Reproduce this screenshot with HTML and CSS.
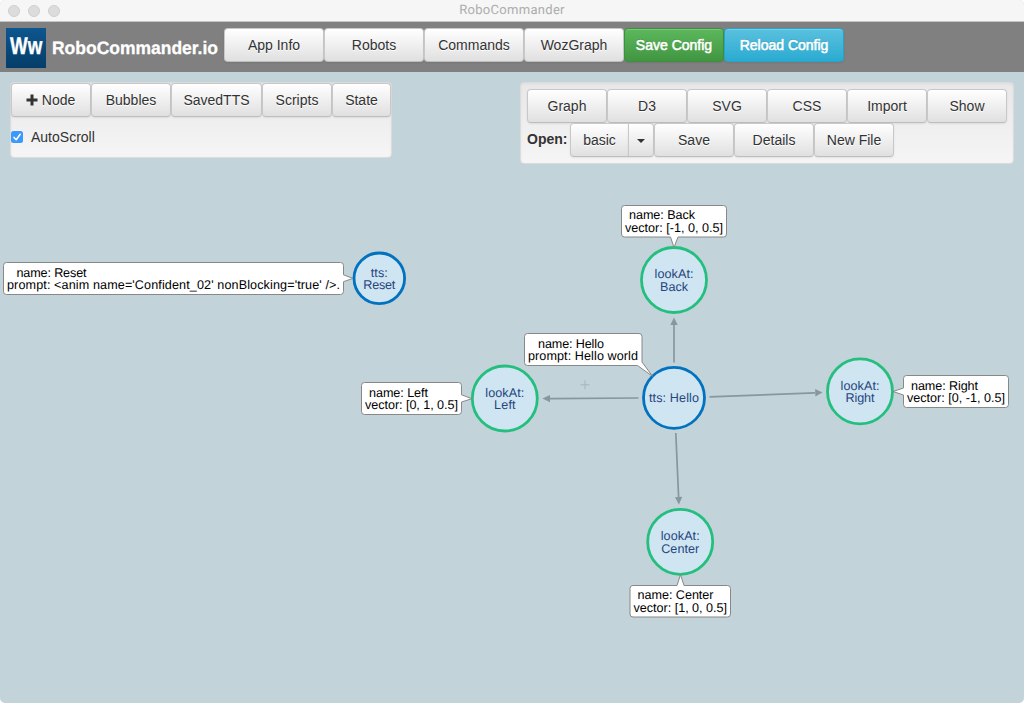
FILE: index.html
```html
<!DOCTYPE html>
<html lang="en">
<head>
<meta charset="utf-8">
<title>RoboCommander</title>
<link rel="stylesheet" href="styles.css">
</head>
<body>
<div class="window">
  <div class="titlebar">
    <div class="lights"><i></i><i></i><i></i></div>
    <span class="title">RoboCommander</span>
  </div>
  <header class="header">
    <div class="logo"><svg width="40" height="40"><text class="logo-text" transform="translate(4 26) scale(.78 1)">Ww</text></svg></div>
    <svg class="brand" width="172" height="30"><text class="brand-text" x="0" y="21" textLength="166" lengthAdjust="spacingAndGlyphs">RoboCommander.io</text></svg>
    <nav class="nav">
      <button class="btn w100">App Info</button>
      <button class="btn w100">Robots</button>
      <button class="btn w100">Commands</button>
      <button class="btn w100">WozGraph</button>
      <button class="btn w100 success">Save Config</button>
      <button class="btn w120 info">Reload Config</button>
    </nav>
  </header>
  <main class="workspace">
    <section class="panel tools">
      <div class="row">
        <button class="btn w80"><svg class="plus" width="12" height="12" viewBox="0 0 12 12"><path d="M4.5 0.5h3v4h4v3h-4v4h-3v-4h-4v-3h4z"/></svg>Node</button>
        <button class="btn w80">Bubbles</button>
        <button class="btn w91">SavedTTS</button>
        <button class="btn w70">Scripts</button>
        <button class="btn w59">State</button>
      </div>
      <label class="auto"><svg class="check" width="12" height="12" viewBox="0 0 12 12"><rect width="12" height="12" rx="2.5"/><path d="M3 6.4L5.2 8.8L9.2 3.2"/></svg>AutoScroll</label>
    </section>
    <section class="panel files">
      <div class="row">
        <button class="btn w80">Graph</button>
        <button class="btn w80">D3</button>
        <button class="btn w80">SVG</button>
        <button class="btn w80">CSS</button>
        <button class="btn w80">Import</button>
        <button class="btn w80">Show</button>
      </div>
      <div class="row">
        <span class="open">Open:</span>
        <button class="btn w59 first">basic</button>
        <button class="btn drop" aria-label="Choose file"><i class="caret"></i></button>
        <button class="btn w80">Save</button>
        <button class="btn w80">Details</button>
        <button class="btn w80">New File</button>
      </div>
    </section>
    <svg class="graph" width="1024" height="631" viewBox="0 72 1024 631">
      <path class="cross" d="M580.5 384.8h9M585 380.3v9"/>
      <g class="edges">
        <path d="M674 362.5V325"/><path class="head" d="M674 317.5l3.7 7.5h-7.4z"/>
        <path d="M638.5 398L550 398.6"/><path class="head" d="M542.5 398.6l7.5-3.7v7.4z"/>
        <path d="M709.5 396.8L815 392.9"/><path class="head" d="M822.5 392.6l-7.4-3.5l.3 7.4z"/>
        <path d="M675.8 433L678.6 497"/><path class="head" d="M678.9 504.5l-3.9-7.3l7.3-.4z"/>
      </g>
      <g class="nodes">
        <circle class="say" cx="379.3" cy="278.3" r="25.3"/>
        <circle class="say" cx="674" cy="397.8" r="30.5"/>
        <circle class="look" cx="674" cy="280" r="32.5"/>
        <circle class="look" cx="504.8" cy="398.5" r="32.5"/>
        <circle class="look" cx="860" cy="391.4" r="32.5"/>
        <circle class="look" cx="680.2" cy="541.8" r="32.5"/>
      </g>
      <g class="node-text">
        <text x="379.3" y="277" textLength="17">tts:</text><text x="379.3" y="289" textLength="32">Reset</text>
        <text x="674" y="402" textLength="50">tts: Hello</text>
        <text x="674" y="278" textLength="39">lookAt:</text><text x="674" y="291" textLength="28">Back</text>
        <text x="504.8" y="397" textLength="39">lookAt:</text><text x="504.8" y="409" textLength="21.5">Left</text>
        <text x="860" y="390" textLength="39">lookAt:</text><text x="860" y="402" textLength="29">Right</text>
        <text x="680.2" y="540" textLength="39">lookAt:</text><text x="680.2" y="553" textLength="38">Center</text>
      </g>
      <g class="bubbles">
        <path d="M6.5 262.5H340.5a3 3 0 0 1 3 3V274.8L353 278.4L343.5 281.7V291.5a3 3 0 0 1-3 3H6.5a3 3 0 0 1-3-3V265.5a3 3 0 0 1 3-3z"/>
        <path d="M624.5 205.5H723.5a3 3 0 0 1 3 3V234a3 3 0 0 1-3 3H678L674 247.5L670.5 237H624.5a3 3 0 0 1-3-3V208.5a3 3 0 0 1 3-3z"/>
        <path d="M527.5 333.5H639a3 3 0 0 1 3 3V362L652.5 376.3L637.5 365.5H527.5a3 3 0 0 1-3-3V336.5a3 3 0 0 1 3-3z"/>
        <path d="M364.5 382.5H458.5a3 3 0 0 1 3 3V394.8L472 398.7L461.5 402V411.5a3 3 0 0 1-3 3H364.5a3 3 0 0 1-3-3V385.5a3 3 0 0 1 3-3z"/>
        <path d="M906.5 375.5H1005.5a3 3 0 0 1 3 3V404.5a3 3 0 0 1-3 3H906.5a3 3 0 0 1-3-3V395L893 391.5L903.5 388V378.5a3 3 0 0 1 3-3z"/>
        <path d="M633 585.5H677L680.5 574.7L684 585.5H727.5a3 3 0 0 1 3 3V614a3 3 0 0 1-3 3H633a3 3 0 0 1-3-3V588.5a3 3 0 0 1 3-3z"/>
      </g>
      <g class="bubble-text">
        <text x="16.5" y="277" textLength="70">name: Reset</text><text x="7" y="289" textLength="333">prompt: &lt;anim name='Confident_02' nonBlocking='true' /&gt;.</text>
        <text x="629" y="219" textLength="66">name: Back</text><text x="625" y="232" textLength="98">vector: [-1, 0, 0.5]</text>
        <text x="538" y="348" textLength="66">name: Hello</text><text x="528" y="360" textLength="110">prompt: Hello world</text>
        <text x="369" y="397" textLength="59">name: Left</text><text x="365" y="409" textLength="93">vector: [0, 1, 0.5]</text>
        <text x="911" y="390" textLength="67">name: Right</text><text x="907" y="402" textLength="98">vector: [0, -1, 0.5]</text>
        <text x="637.5" y="599" textLength="76">name: Center</text><text x="633.5" y="612" textLength="93.5">vector: [1, 0, 0.5]</text>
      </g>
    </svg>
  </main>
</div>
</body>
</html>
```

FILE: styles.css
```css
* { box-sizing: border-box; }
body { margin: 0; background: #fff; font: 14px/20px "Liberation Sans", Arial, sans-serif; color: #333; }
.window { width: 1024px; height: 703px; border-radius: 5px; overflow: hidden; background: #c3d3da; display: flex; flex-direction: column; }
.titlebar { height: 22px; flex: none; background: #f6f6f6; border-bottom: 1px solid #c4c4c4; display: flex; align-items: center; padding-left: 8px; }
.lights { display: flex; gap: 8px; width: 80px; }
.lights i { width: 12px; height: 12px; border-radius: 50%; background: #dcdcdc; border: 1px solid #cecece; }
.title { flex: 1; padding-right: 88px; text-align: center; font: 13px/20px Roboto, sans-serif; letter-spacing: 0.3px; color: #adadad; padding-top: 1px; text-rendering: geometricPrecision; }
.header { height: 50px; flex: none; background: #808080; display: flex; align-items: flex-start; padding: 6px; }
.logo { width: 40px; height: 40px; background: linear-gradient(#0d568f, #053d68); }
.logo svg { display: block; }
.logo-text { font: bold 24px "Liberation Sans", sans-serif; fill: #fff; stroke: #fff; stroke-width: .4px; text-rendering: geometricPrecision; }
.brand { margin-left: 6px; margin-top: 5px; }
.brand-text { font: bold 18px "Liberation Sans", sans-serif; fill: #fff; stroke: #fff; stroke-width: .3px; text-rendering: geometricPrecision; }
.nav, .row { display: flex; }
.btn { flex: none; height: 34px; padding: 0 0 1px; border: 1px solid #c8c8c8; border-bottom-color: #bdbdbd; border-radius: 4px; background: linear-gradient(#fff, #e0e0e0); font: inherit; color: #333; text-align: center; text-shadow: 0 1px 0 #fff; box-shadow: inset 0 1px 0 rgba(255,255,255,.2), 0 1px 2px rgba(0,0,0,.08); }
.w100 { width: 100px; }
.w120 { width: 120px; }
.w80 { width: 80px; }
.w91 { width: 91px; }
.w70 { width: 70px; }
.w59 { width: 59px; }
.success, .info { color: #fff; -webkit-text-stroke: .55px #fff; text-shadow: 0 -1px 0 rgba(0,0,0,.2); }
.success { background: linear-gradient(#5cb85c, #419641); border-color: #3e8f3e; }
.info { background: linear-gradient(#5bc0de, #2aabd2); border-color: #28a4c9; }
.workspace { flex: 1; position: relative; display: flex; justify-content: space-between; align-items: flex-start; padding: 10px 10px 0; }
.panel { background: linear-gradient(#e8e8e8, #f5f5f5); border: 1px solid #dcdcdc; border-radius: 4px; box-shadow: inset 0 1px 3px rgba(0,0,0,.05); }
.tools { width: 382px; height: 76px; }
.plus { fill: #333; margin-right: 4px; margin-left: -1px; vertical-align: -1px; }
.auto { display: flex; align-items: center; gap: 8px; margin-top: 10px; }
.check rect { fill: #3b99fc; }
.check path { fill: none; stroke: #fff; stroke-width: 1.5; stroke-linecap: round; stroke-linejoin: round; }
.files { width: 494px; height: 82px; padding: 6px; }
.open { width: 43px; font-weight: bold; line-height: 32px; }
.first { border-radius: 4px 0 0 4px; }
.drop { width: 26px; margin-left: -1px; border-radius: 0 4px 4px 0; display: flex; align-items: center; justify-content: center; }
.caret { border: 4px solid transparent; border-top-color: #333; border-bottom: 0; margin-top: 2px; }
.graph { position: absolute; left: 0; top: 0; pointer-events: none; }
.edges path { stroke: #8797a0; stroke-width: 1.7; fill: none; }
.edges .head { fill: #8797a0; stroke: none; }
.cross { stroke: #a9b5ba; stroke-width: 1; }
.nodes circle { fill: #cfe5f2; stroke-width: 2.8; }
.nodes .say { stroke: #0072bf; }
.nodes .look { stroke: #24bf7f; }
.node-text { font-size: 12.6px; fill: #26467f; text-anchor: middle; text-rendering: geometricPrecision; }
.bubbles path { fill: #fff; stroke: #888; stroke-width: 1; }
.bubble-text { font-size: 12.6px; fill: #000; text-rendering: geometricPrecision; }
```
